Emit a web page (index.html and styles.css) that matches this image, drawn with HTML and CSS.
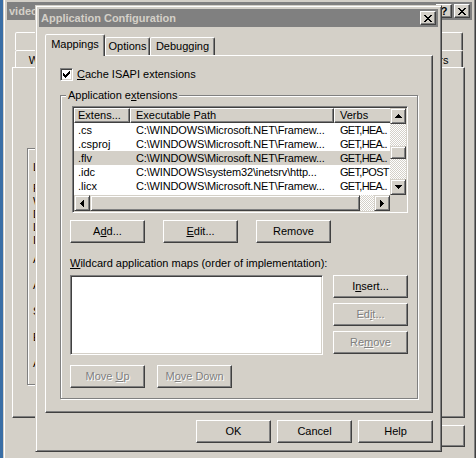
FILE: index.html
```html
<!DOCTYPE html>
<html lang="en">
<head>
  <meta charset="UTF-8" />
  <title>Application Configuration</title>
  <link rel="stylesheet" href="styles.css">
</head>
<body>
  <!-- property sheet behind the dialog -->
  <div class="window back">
    <div class="caption">
      <span class="title">video Properties</span>
      <span class="cap-btn help">?</span>
      <span class="cap-btn close">
        <svg width="8" height="7" viewBox="0 0 8 7" shape-rendering="crispEdges"><path d="M0 0h2v1H0zM6 0h2v1H6zM1 1h2v1H1zM5 1h2v1H5zM2 2h4v1H2zM3 3h2v1H3zM2 4h4v1H2zM1 5h2v1H1zM5 5h2v1H5zM0 6h2v1H0zM6 6h2v1H6z"/></svg>
      </span>
    </div>
    <div class="client">
      <div class="btabs row1">
        <div class="tab wide">Virtual Directory</div>
        <div class="tab grow">Documents</div>
        <div class="tab grow">Directory Security</div>
        <div class="tab grow">ASP.NET</div>
      </div>
      <div class="btabs row2">
        <div class="tab first">Web Site</div>
        <div class="tab grow">HTTP Headers</div>
        <div class="tab last">Custom Errors</div>
      </div>
      <div class="panel back-panel">
        <div class="group back-group">
          <div class="line">Local path:</div>
          <div class="b-checks">
            <div class="line">Read</div>
            <div class="line">Write</div>
            <div class="line">Directory browsing</div>
            <div class="line">Log visits</div>
            <div class="line">Index this resource</div>
          </div>
          <div class="b-apps">
            <div class="line">Application name:</div>
            <div class="line">Application settings</div>
            <div class="line">Starting point:</div>
            <div class="line">Execute permissions:</div>
            <div class="line">Application pool:</div>
          </div>
        </div>
      </div>
      <div class="dlg-buttons">
        <div class="btn">OK</div>
        <div class="btn">Cancel</div>
        <div class="btn">Apply</div>
        <div class="btn">Help</div>
      </div>
    </div>
  </div>

  <!-- Application Configuration dialog -->
  <div class="window front">
    <div class="caption">
      <span class="title">Application Configuration</span>
      <span class="cap-btn close">
        <svg width="8" height="7" viewBox="0 0 8 7" shape-rendering="crispEdges"><path d="M0 0h2v1H0zM6 0h2v1H6zM1 1h2v1H1zM5 1h2v1H5zM2 2h4v1H2zM3 3h2v1H3zM2 4h4v1H2zM1 5h2v1H1zM5 5h2v1H5zM0 6h2v1H0zM6 6h2v1H6z"/></svg>
      </span>
    </div>
    <div class="client">
      <div class="tabs">
        <div class="tab selected mappings">Mappings</div>
        <div class="tab options">Options</div>
        <div class="tab debugging">Debugging</div>
      </div>
      <div class="panel front-panel">
        <div class="check-row">
          <span class="checkbox">
            <svg width="7" height="7" viewBox="0 0 7 7" shape-rendering="crispEdges"><path d="M6 0h1v1H6zM5 1h2v1H5zM0 2h1v1H0zM4 2h3v1H4zM0 3h2v1H0zM3 3h3v1H3zM0 4h5v1H0zM1 5h3v1H1zM2 6h1v1H2z"/></svg>
          </span>
          <span><u>C</u>ache ISAPI extensions</span>
        </div>

        <div class="group ext-group">
          <span class="group-label">Application e<u>x</u>tensions</span>

          <div class="listview">
            <div class="lv-body">
              <div class="lv-header">
                <div class="hcell c1">Extens...</div>
                <div class="hcell c2">Executable Path</div>
                <div class="hcell c3">Verbs</div>
              </div>
              <div class="lv-row">
                <div class="cell c1">.cs</div>
                <div class="cell c2">C:\WINDOWS\Microsoft.NET\Framew...</div>
                <div class="cell c3">GET,HEA..</div>
              </div>
              <div class="lv-row">
                <div class="cell c1">.csproj</div>
                <div class="cell c2">C:\WINDOWS\Microsoft.NET\Framew...</div>
                <div class="cell c3">GET,HEA..</div>
              </div>
              <div class="lv-row selected">
                <div class="cell c1">.flv</div>
                <div class="cell c2">C:\WINDOWS\Microsoft.NET\Framew...</div>
                <div class="cell c3">GET,HEA..</div>
              </div>
              <div class="lv-row">
                <div class="cell c1">.idc</div>
                <div class="cell c2">C:\WINDOWS\system32\inetsrv\http...</div>
                <div class="cell c3">GET,POST</div>
              </div>
              <div class="lv-row">
                <div class="cell c1">.licx</div>
                <div class="cell c2">C:\WINDOWS\Microsoft.NET\Framew...</div>
                <div class="cell c3">GET,HEA..</div>
              </div>
            </div>

            <div class="vscroll">
              <div class="sbtn">
                <svg width="7" height="4" viewBox="0 0 7 4" shape-rendering="crispEdges"><path d="M3 0h1v1H3zM2 1h3v1H2zM1 2h5v1H1zM0 3h7v1H0z"/></svg>
              </div>
              <div class="vtrack">
                <div class="dither vtop"></div>
                <div class="thumb vthumb"></div>
                <div class="dither fill"></div>
              </div>
              <div class="sbtn">
                <svg width="7" height="4" viewBox="0 0 7 4" shape-rendering="crispEdges"><path d="M0 0h7v1H0zM1 1h5v1H1zM2 2h3v1H2zM3 3h1v1H3z"/></svg>
              </div>
            </div>

            <div class="hscroll">
              <div class="sbtn">
                <svg width="4" height="7" viewBox="0 0 4 7" shape-rendering="crispEdges"><path d="M3 0h1v7H3zM2 1h1v5H2zM1 2h1v3H1zM0 3h1v1H0z"/></svg>
              </div>
              <div class="htrack">
                <div class="thumb hthumb"></div>
                <div class="dither fill"></div>
              </div>
              <div class="sbtn">
                <svg width="4" height="7" viewBox="0 0 4 7" shape-rendering="crispEdges"><path d="M0 0h1v7H0zM1 1h1v5H1zM2 2h1v3H2zM3 3h1v1H3z"/></svg>
              </div>
            </div>

            <div class="corner"></div>
          </div>

          <div class="btn-row">
            <div class="btn">A<u>d</u>d...</div>
            <div class="btn"><u>E</u>dit...</div>
            <div class="btn">Remove</div>
          </div>

          <div class="wild-label"><u>W</u>ildcard application maps (order of implementation):</div>

          <div class="maps">
            <div class="listbox"></div>
            <div class="side-buttons">
              <div class="btn">I<u>n</u>sert...</div>
              <div class="btn disabled">Ed<u>i</u>t...</div>
              <div class="btn disabled">Re<u>m</u>ove</div>
            </div>
          </div>

          <div class="move-row">
            <div class="btn disabled">Move <u>U</u>p</div>
            <div class="btn disabled">M<u>o</u>ve Down</div>
          </div>
        </div>
      </div>

      <div class="dlg-buttons">
        <div class="btn">OK</div>
        <div class="btn">Cancel</div>
        <div class="btn">Help</div>
      </div>
    </div>
  </div>
</body>
</html>
```

FILE: styles.css
```css
* {
  box-sizing: border-box;
}

body {
  margin: 0;
  width: 476px;
  height: 458px;
  overflow: hidden;
  position: relative;
  background: #3a6ea5;
  font-family: "Liberation Sans", Arial, sans-serif;
  font-size: 11px;
  line-height: 13px;
  color: #000;
}

u {
  text-underline-offset: 1px;
}

/* Windows */
.window {
  position: absolute;
  display: flex;
  flex-direction: column;
  background: #d4d0c8;
  border: 1px solid;
  border-color: #d4d0c8 #404040 #404040 #d4d0c8;
  box-shadow: inset 1px 1px #fff, inset -1px -1px #808080;
  padding: 3px;
}

.back {
  left: 3px;
  top: -2px;
  width: 473px;
  height: 466px;
}

.front {
  left: 35px;
  top: 5px;
  width: 407px;
  height: 447px;
}

.caption {
  flex: none;
  height: 18px;
  display: flex;
  align-items: center;
  padding-left: 2px;
  background: #808080;
  color: #d4d0c8;
  font-weight: bold;
}

.caption .title {
  flex: 1;
  white-space: nowrap;
  overflow: hidden;
}

.cap-btn {
  flex: none;
  width: 16px;
  height: 14px;
  margin-right: 2px;
  display: flex;
  align-items: center;
  justify-content: center;
  background: #d4d0c8;
  color: #000;
  border: 1px solid;
  border-color: #fff #404040 #404040 #fff;
  box-shadow: inset -1px -1px #808080;
}

.cap-btn.help {
  font-size: 11px;
  line-height: 12px;
}

/* Tabs and panels */
.tab {
  flex: none;
  border: 1px solid;
  border-bottom: none;
  border-color: #fff #404040 transparent #fff;
  border-radius: 2px 2px 0 0;
  box-shadow: inset -1px 0 #808080;
  background: #d4d0c8;
  text-align: center;
  white-space: nowrap;
  overflow: hidden;
}

.front .client {
  flex: 1;
  display: flex;
  flex-direction: column;
  padding: 7px 5px 0 6px;
}

.tabs {
  height: 21px;
  display: flex;
  align-items: flex-end;
  position: relative;
  z-index: 1;
}

.tabs .tab {
  height: 18px;
  padding-top: 2px;
}

.tabs .tab.selected {
  height: 22px;
  margin-bottom: -1px;
  padding-top: 3px;
}

.mappings { width: 60px; }
.options { width: 45px; }
.debugging { width: 65px; }

.panel {
  flex: none;
  border: 1px solid;
  border-color: #fff #404040 #404040 #fff;
  box-shadow: inset -1px -1px #808080;
}

.front-panel {
  height: 358px;
  padding: 12px 0 0 14px;
}

/* Checkbox */
.check-row {
  display: flex;
  align-items: center;
  gap: 4px;
  height: 13px;
}

.checkbox {
  width: 13px;
  height: 13px;
  display: flex;
  align-items: center;
  justify-content: center;
  background: #fff;
  border: 1px solid;
  border-color: #808080 #fff #fff #808080;
  box-shadow: inset 1px 1px #404040, inset -1px -1px #d4d0c8;
}

/* Group boxes */
.group {
  position: relative;
  border: 1px solid #808080;
  box-shadow: inset 1px 1px #fff, 1px 1px #fff;
}

.group-label {
  position: absolute;
  top: -7px;
  left: 5px;
  padding: 0 2px;
  background: #d4d0c8;
  white-space: nowrap;
}

.ext-group {
  width: 358px;
  height: 304px;
  margin-top: 14px;
  padding: 10px 0 0 9px;
}

/* List view */
.listview {
  width: 336px;
  height: 107px;
  margin-left: 2px;
  display: grid;
  grid-template-columns: 316px 16px;
  grid-template-rows: 87px 16px;
  padding: 1px;
  background: #fff;
  border: 1px solid;
  border-color: #808080 #fff #fff #808080;
  box-shadow: inset 1px 1px #404040, inset -1px -1px #d4d0c8;
}

.lv-body {
  overflow: hidden;
}

.lv-header,
.lv-row {
  display: flex;
  width: 400px;
}

.lv-header {
  height: 15px;
}

.hcell {
  flex: none;
  height: 15px;
  line-height: 13px;
  background: #d4d0c8;
  border: 1px solid;
  border-color: #fff #404040 #404040 #fff;
  box-shadow: inset -1px -1px #808080;
  padding-left: 5px;
  white-space: nowrap;
  overflow: hidden;
}

.lv-row {
  height: 14px;
  line-height: 15px;
}

.lv-row.selected {
  background: #d4d0c8;
}

.cell {
  flex: none;
  white-space: nowrap;
  overflow: hidden;
  padding-left: 6px;
}

.c1 { width: 56px; }
.c2 { width: 204px; }
.c3 { width: 140px; }

.cell.c1 { padding-left: 4px; }
.hcell.c1 { padding-left: 3px; }

.cell.c2 { letter-spacing: -0.15px; }
.cell.c3 { letter-spacing: -0.7px; }

/* Scroll bars */
.sbtn,
.thumb {
  flex: none;
  background: #d4d0c8;
  border: 1px solid;
  border-color: #d4d0c8 #404040 #404040 #d4d0c8;
  box-shadow: inset 1px 1px #fff, inset -1px -1px #808080;
}

.sbtn {
  width: 16px;
  height: 16px;
  display: flex;
  align-items: center;
  justify-content: center;
}

.dither {
  background-color: #fff;
  background-image: conic-gradient(#d4d0c8 25%, #fff 0 50%, #d4d0c8 0 75%, #fff 0);
  background-size: 2px 2px;
}

.fill {
  flex: 1;
}

.vscroll {
  display: flex;
  flex-direction: column;
}

.vtrack {
  flex: 1;
  display: flex;
  flex-direction: column;
}

.vtop {
  height: 22px;
}

.vthumb {
  height: 13px;
}

.hscroll {
  display: flex;
}

.htrack {
  flex: 1;
  display: flex;
}

.hthumb {
  width: 270px;
}

.corner {
  background: #d4d0c8;
}

/* Buttons */
.btn {
  flex: none;
  width: 75px;
  height: 23px;
  line-height: 21px;
  text-align: center;
  background: #d4d0c8;
  border: 1px solid;
  border-color: #fff #404040 #404040 #fff;
  box-shadow: inset -1px -1px #808080;
  white-space: nowrap;
}

.btn.disabled {
  color: #808080;
  text-shadow: 1px 1px #fff;
}

.btn-row {
  display: flex;
  gap: 18px;
  margin-top: 7px;
}

.wild-label {
  margin-top: 14px;
  white-space: nowrap;
}

.maps {
  display: flex;
  gap: 10px;
  margin-top: 5px;
}

.listbox {
  width: 253px;
  height: 80px;
  background: #fff;
  border: 1px solid;
  border-color: #808080 #fff #fff #808080;
  box-shadow: inset 1px 1px #404040, inset -1px -1px #d4d0c8;
}

.side-buttons {
  display: flex;
  flex-direction: column;
  gap: 5px;
}

.move-row {
  display: flex;
  gap: 12px;
  margin-top: 10px;
}

.dlg-buttons {
  display: flex;
  justify-content: flex-end;
  gap: 6px;
  margin-top: 7px;
}

/* Property sheet behind */
.back .client {
  flex: 1;
  display: flex;
  flex-direction: column;
  padding: 12px 7px 0 5px;
}

.btabs {
  display: flex;
  padding: 0 2px 0 3px;
}

.btabs .tab {
  padding-top: 3px;
}

.btabs.row1 .tab {
  height: 18px;
}

.btabs.row2 .tab {
  height: 17px;
}

.btabs .grow {
  flex: 1;
}

.btabs .wide {
  width: 140px;
}

.btabs .first {
  width: 72px;
}

.btabs .last {
  width: 100px;
}

.back-panel {
  height: 351px;
  padding: 80px 0 0 14px;
}

.back .dlg-buttons .btn {
  height: 22px;
  line-height: 20px;
}

.back-group {
  width: 380px;
  height: 237px;
  padding: 12px 0 0 5px;
}

.back-group .line {
  white-space: nowrap;
}

.b-checks {
  margin-top: 8px;
}

.b-apps {
  margin-top: 6px;
}

.b-apps .line + .line {
  margin-top: 13px;
}
```
